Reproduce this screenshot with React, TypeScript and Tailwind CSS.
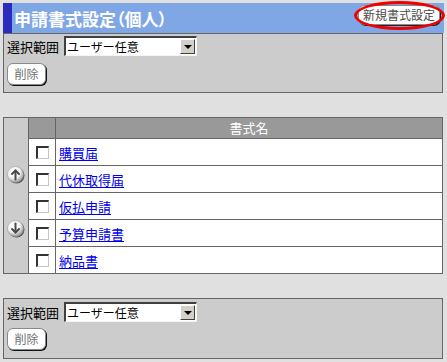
const rows = ['購買届', '代休取得届', '仮払申請', '予算申請書', '納品書']

function ArrowIcon({ dir }: { dir: 'up' | 'down' }) {
  const id = `grad-${dir}`
  return (
    <svg width="18" height="18" viewBox="0 0 18 18" className="block">
      <defs>
        <radialGradient id={id} cx="40%" cy="35%" r="70%">
          <stop offset="0" stopColor="#ffffff" />
          <stop offset="0.55" stopColor="#f2f2f2" />
          <stop offset="1" stopColor="#8a8a8a" />
        </radialGradient>
      </defs>
      <circle cx="9.5" cy="9.5" r="8" fill="#555" />
      <circle cx="8.5" cy="8.5" r="8" fill={`url(#${id})`} stroke="#9a9a9a" strokeWidth="0.6" />
      {dir === 'up' ? (
        <g stroke="#4a4a4a" strokeWidth="2" fill="none" strokeLinecap="round" strokeLinejoin="round">
          <line x1="8.5" y1="13.5" x2="8.5" y2="4.5" />
          <polyline points="5,8 8.5,4.5 12,8" />
        </g>
      ) : (
        <g stroke="#4a4a4a" strokeWidth="2" fill="none" strokeLinecap="round" strokeLinejoin="round">
          <line x1="8.5" y1="3.5" x2="8.5" y2="12.5" />
          <polyline points="5,9 8.5,12.5 12,9" />
        </g>
      )}
    </svg>
  )
}

function ScopeSelect() {
  return (
    <div className="flex items-center h-[20px]">
      <span className="text-[13px] leading-none text-black">選択範囲</span>
      <div className="ml-[5px] w-[133px] h-[20px] flex items-stretch bg-white border-t-2 border-l-2 border-t-[#404040] border-l-[#404040] border-b border-r border-b-[#f4f4f4] border-r-[#f4f4f4]">
        <span className="flex-1 pl-[1px] text-[12px] leading-[18px] text-black">ユーザー任意</span>
        <span className="w-[15px] my-[1px] mr-[1px] flex items-center justify-center bg-[#d4d0c8] border-t border-l border-t-white border-l-white border-b border-r border-b-[#404040] border-r-[#404040]">
          <span className="w-0 h-0 border-l-[4px] border-r-[4px] border-t-[4px] border-l-transparent border-r-transparent border-t-black" />
        </span>
      </div>
    </div>
  )
}

function DeleteButton() {
  return (
    <button className="h-[22px] w-[39px] rounded-[6px] bg-white border border-[#8a8a8a] shadow-[1px_1px_0_#111] text-[12px] leading-none text-[#707070]">
      削除
    </button>
  )
}

export default function App() {
  return (
    <div className="w-[447px] h-[362px] bg-[#e0e0e0] pt-[3px] pl-[3px] font-['Noto_Sans_CJK_JP',sans-serif] overflow-hidden">
      {/* 上部パネル */}
      <div className="w-[440px]">
        <div className="relative h-[30px] flex items-stretch bg-[#7fa7e6] w-[441px]">
          <div className="w-[9px] bg-[#2b2bbf]" />
          <h1 className="ml-[2px] self-center text-[17px] leading-none font-bold text-white [font-feature-settings:'palt']">
            申請書式設定（個人）
          </h1>
          <button className="absolute left-[355px] top-[2px] h-[20px] w-[82px] rounded-[7px] bg-white border border-[#8a8a8a] shadow-[1px_1px_0_#222] text-[12px] leading-none text-[#4a4a4a]">
            新規書式設定
          </button>
          <span className="absolute left-[351px] top-[-2px] w-[91px] h-[29px] rounded-[50%] border-[3px] border-[#f00000] pointer-events-none" />
        </div>
        <div className="h-[60px] border border-[#666] bg-[#cccccc] pl-[3px] pt-[2px] flex flex-col gap-[7px]">
          <ScopeSelect />
          <DeleteButton />
        </div>
      </div>

      {/* 一覧 */}
      <div className="mt-[24px] w-[440px] flex border border-[#666]">
        <div className="w-[25px] bg-[#cccccc] border-r border-[#666] flex flex-col items-center pt-[48px] gap-[36px]">
          <ArrowIcon dir="up" />
          <ArrowIcon dir="down" />
        </div>
        <div className="flex-1 flex flex-col">
          <div className="h-[20px] flex bg-[#999999]">
            <div className="w-[27px] border-r border-[#666]" />
            <div className="flex-1 text-center text-[13px] leading-[20px] text-white">書式名</div>
          </div>
          {rows.map((name) => (
            <div key={name} className="h-[27px] flex bg-white border-t border-[#666]">
              <div className="w-[27px] border-r border-[#666] flex items-center justify-center pl-[1px]">
                <span className="w-[13px] h-[13px] bg-white border-t-2 border-l-2 border-t-[#333] border-l-[#333] border-b border-r border-b-[#c4c4c4] border-r-[#c4c4c4]" />
              </div>
              <div className="flex-1 pl-[3px] flex items-center">
                <a href="#" className="text-[13px] leading-none text-[#0000ee] underline underline-offset-2">
                  {name}
                </a>
              </div>
            </div>
          ))}
        </div>
      </div>

      {/* 下部パネル */}
      <div className="mt-[24px] w-[440px] h-[61px] border border-[#666] bg-[#cccccc] pl-[3px] pt-[3px] flex flex-col gap-[6px]">
        <ScopeSelect />
        <DeleteButton />
      </div>
    </div>
  )
}
